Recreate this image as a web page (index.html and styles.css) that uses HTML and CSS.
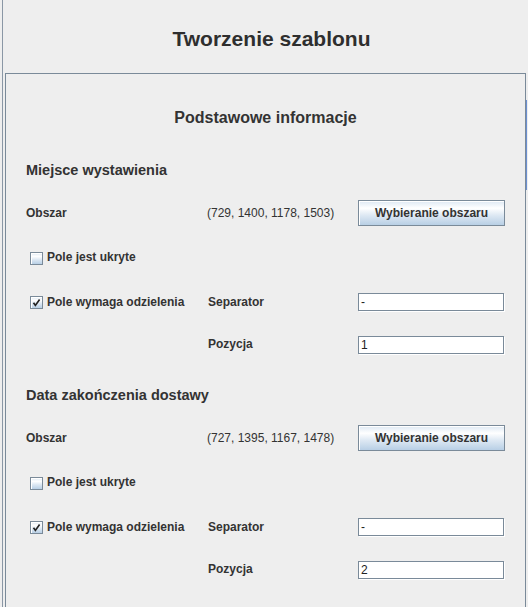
FILE: index.html
```html
<!DOCTYPE html>
<html lang="pl">
<head>
<meta charset="utf-8">
<title>Tworzenie szablonu</title>
<link rel="stylesheet" href="styles.css">
</head>
<body>
<div class="edge"></div>
<div class="main">
  <header class="header"><h1 class="title">Tworzenie szablonu</h1></header>
  <div class="panel">
    <h2 class="panel-title">Podstawowe informacje</h2>

    <section class="section">
      <h3 class="section-title">Miejsce wystawienia</h3>
      <span class="label">Obszar</span>
      <span class="coords">(729, 1400, 1178, 1503)</span>
      <button class="btn" type="button">Wybieranie obszaru</button>

      <label class="check"><span class="box"></span>Pole jest ukryte</label>

      <label class="check"><span class="box checked"><svg viewBox="0 0 13 13" width="13" height="13"><path d="M3.5 6.8 L5.4 9.4 L9.6 3.6" fill="none" stroke="#222" stroke-width="1.7"/></svg></span>Pole wymaga odzielenia</label>
      <span class="label">Separator</span>
      <span class="field">-</span>

      <span class="label col2">Pozycja</span>
      <span class="field">1</span>
    </section>

    <section class="section">
      <h3 class="section-title">Data zakończenia dostawy</h3>
      <span class="label">Obszar</span>
      <span class="coords">(727, 1395, 1167, 1478)</span>
      <button class="btn" type="button">Wybieranie obszaru</button>

      <label class="check"><span class="box"></span>Pole jest ukryte</label>

      <label class="check"><span class="box checked"><svg viewBox="0 0 13 13" width="13" height="13"><path d="M3.5 6.8 L5.4 9.4 L9.6 3.6" fill="none" stroke="#222" stroke-width="1.7"/></svg></span>Pole wymaga odzielenia</label>
      <span class="label">Separator</span>
      <span class="field">-</span>

      <span class="label col2">Pozycja</span>
      <span class="field">2</span>
    </section>
  </div>
</div>
<div class="right-strip"><div class="blue-mark"></div></div>
</body>
</html>
```

FILE: styles.css
```css
html, body {
  margin: 0;
  padding: 0;
}
body {
  width: 528px;
  height: 607px;
  overflow: hidden;
  background: #eeeeee;
  display: flex;
  align-items: flex-start;
  font-family: "Liberation Sans", Arial, sans-serif;
  color: #333333;
}
.edge {
  width: 2px;
  height: 607px;
  flex: none;
  border-right: 1px solid #8a97a5;
}
.main {
  width: 523px;
  flex: none;
  display: flex;
  flex-direction: column;
}
.header {
  flex: none;
  height: 73px;
  box-sizing: border-box;
  padding-top: 4px;
  padding-left: 14px;
  display: flex;
  align-items: center;
  justify-content: center;
}
.title {
  margin: 0;
  font-size: 21px;
  font-weight: bold;
  line-height: 24px;
  color: #2e2e2e;
}
.panel {
  flex: none;
  margin-left: 2px;
  width: 521px;
  box-sizing: border-box;
  border: 1px solid #7a8a99;
  border-bottom: none;
  padding-left: 20px;
}
.panel-title {
  margin: 34px 0 32px;
  text-align: center;
  font-size: 16px;
  line-height: 20px;
  font-weight: bold;
  padding-right: 20px;
}
.section {
  display: grid;
  grid-template-columns: 181px 151px 147px;
  grid-template-rows: 31px 44px 45px 44px 41px;
  align-items: center;
  margin-bottom: 20px;
}
.section-title {
  grid-column: 1 / -1;
  align-self: start;
  margin: 0;
  font-size: 14.5px;
  line-height: 20px;
  font-weight: bold;
}
.label {
  font-size: 12px;
  font-weight: bold;
  line-height: 15px;
}
.col2 {
  grid-column: 2;
  padding-left: 1px;
}
.coords {
  font-size: 12px;
  line-height: 15px;
}
.btn {
  width: 147px;
  height: 26px;
  box-sizing: border-box;
  margin: 0;
  padding: 0;
  border: 1px solid #7a8a99;
  box-shadow: inset 1px 1px 0 #ffffff;
  background: linear-gradient(to bottom, #dde8f3 0%, #ffffff 30%, #dde8f3 60%, #b8cfe5 100%);
  font-family: "Liberation Sans", Arial, sans-serif;
  font-size: 12px;
  font-weight: bold;
  color: #333333;
}
.check {
  grid-column: 1;
  display: flex;
  align-items: center;
  gap: 4px;
  padding-left: 4px;
  font-size: 12px;
  font-weight: bold;
  line-height: 15px;
  white-space: nowrap;
}
.check + .label {
  padding-left: 1px;
}
.box {
  flex: none;
  border: 1px solid #7a8a99;
  box-sizing: border-box;
  width: 13px;
  height: 13px;
  background: linear-gradient(to bottom, #dde8f3 0%, #ffffff 30%, #dde8f3 60%, #b8cfe5 100%);
  box-shadow: inset 1px 1px 0 #ffffff;
  display: flex;
  margin-top: 1px;
}
.box svg {
  margin: -1px;
}
.field {
  width: 146px;
  height: 18px;
  box-sizing: border-box;
  border: 1px solid #7a8a99;
  box-shadow: 1px 1px 0 #ffffff;
  background: #ffffff;
  font-size: 12px;
  line-height: 16px;
  padding-left: 2px;
  color: #222222;
}
.right-strip {
  width: 2px;
  flex: none;
  padding-top: 100px;
}
.blue-mark {
  height: 90px;
  border-left: 1px solid #6c8fd0;
}
```
